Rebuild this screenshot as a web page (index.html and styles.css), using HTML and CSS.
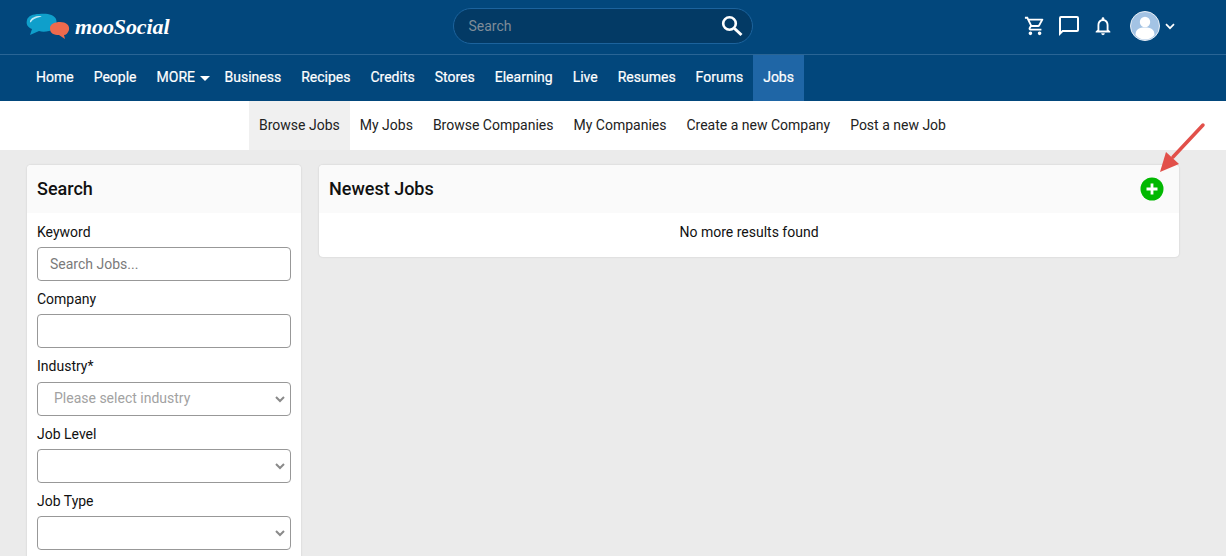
FILE: index.html
```html
<!DOCTYPE html>
<html lang="en">
<head>
<meta charset="utf-8">
<title>Jobs</title>
<link rel="stylesheet" href="styles.css">
</head>
<body>
<header class="topbar">
  <a class="logo" href="#">
    <svg class="logo-mark" width="44" height="27" viewBox="0 0 44 27">
      <path d="M13 1c7-1 15 0 17 5 2 6-1 11-7 12-4 1-7 1-10 0l-9 4 2-6C1 14 0 11 1 7c1-4 6-6 12-6z" fill="#0f9fcb"/>
      <path d="M4 8c1-3 5-5 10-5 2 0 2 1 0 1-4 1-7 2-9 5-1 1-1 0-1-1z" fill="#bfe8f5"/>
      <path d="M34 9c6 0 10 3 9 8-1 3-3 5-5 5l1 4-6-4c-5 0-9-1-9-7 0-4 5-6 10-6z" fill="#ee6a4d"/>
    </svg>
    <span class="logo-text">mooSocial</span>
  </a>
  <form class="site-search">
    <span class="site-search-text">Search</span>
    <svg width="22" height="22" viewBox="0 0 22 22" fill="none" stroke="#fff"><circle cx="8.5" cy="8.5" r="6.3" stroke-width="2.6"/><path d="M13.5 13.5l7 6.5" stroke-width="3"/></svg>
  </form>
  <div class="top-icons">
    <svg class="icon-cart" width="22" height="22" viewBox="0 0 24 24" fill="#fff"><path d="M15.55 13c.75 0 1.41-.41 1.75-1.03l3.58-6.49A1 1 0 0 0 20.01 4H5.21l-.94-2H1v2h2l3.6 7.59-1.35 2.44C4.52 15.37 5.48 17 7 17h12v-2H7l1.1-2h7.45zM6.16 6h12.15l-2.76 5H8.53L6.16 6zM7 18a2 2 0 1 0 0 4 2 2 0 0 0 0-4zm10 0a2 2 0 1 0 0 4 2 2 0 0 0 0-4z"/></svg>
    <svg class="icon-chat" width="24" height="24" viewBox="0 0 24 24" fill="#fff"><path d="M20 2H4a2 2 0 0 0-2 2v18l4-4h14a2 2 0 0 0 2-2V4a2 2 0 0 0-2-2zm0 14H5.2L4 17.2V4h16v12z"/></svg>
    <svg class="icon-bell" width="22" height="22" viewBox="0 0 24 24" fill="#fff"><path d="M12 22a2 2 0 0 0 2-2h-4a2 2 0 0 0 2 2zm6-6v-5c0-3.07-1.63-5.64-4.5-6.32V4a1.5 1.5 0 0 0-3 0v.68C7.64 5.36 6 7.92 6 11v5l-2 2v1h16v-1l-2-2zm-2 1H8v-6c0-2.48 1.51-4.5 4-4.5s4 2.02 4 4.5v6z"/></svg>
    <span class="avatar">
      <svg width="30" height="30" viewBox="0 0 30 30"><circle cx="15" cy="15" r="14.5" fill="#a3c3e4" stroke="#e8eef5"/><circle cx="15" cy="11" r="5.2" fill="#fff"/><path d="M5.5 24c0-6 4-7.5 9.5-7.5s9.500 1.500 9.500 7.500c-2.500 3-6 4.500-9.500 4.500s-7-1.500-9.500-4.500z" fill="#fff"/></svg>
      <svg width="10" height="7" viewBox="0 0 10 7" fill="none" stroke="#fff" stroke-width="1.700"><path d="M1 1.200l4 4 4-4"/></svg>
    </span>
  </div>
</header>
<nav class="mainnav">
  <a href="#">Home</a>
  <a href="#">People</a>
  <a class="more" href="#">MORE<i class="caret"></i></a>
  <a href="#">Business</a>
  <a href="#">Recipes</a>
  <a href="#">Credits</a>
  <a href="#">Stores</a>
  <a href="#">Elearning</a>
  <a href="#">Live</a>
  <a href="#">Resumes</a>
  <a href="#">Forums</a>
  <a class="active" href="#">Jobs</a>
</nav>
<nav class="subnav">
  <a class="active" href="#">Browse Jobs</a>
  <a href="#">My Jobs</a>
  <a href="#">Browse Companies</a>
  <a href="#">My Companies</a>
  <a href="#">Create a new Company</a>
  <a href="#">Post a new Job</a>
</nav>
<main class="content">
  <aside class="card sidebar">
    <h2 class="card-head">Search</h2>
    <form class="filter">
      <label class="lbl">Keyword</label>
      <div class="field placeholder">Search Jobs...</div>
      <label class="lbl">Company</label>
      <div class="field"></div>
      <label class="lbl lbl-tall">Industry*</label>
      <div class="field select placeholder-select"><span class="select-text">Please select industry</span><svg class="chev" width="10" height="7" viewBox="0 0 10 7" fill="none" stroke="#8a8a8a" stroke-width="2"><path d="M1 1l4 4 4-4"/></svg></div>
      <label class="lbl">Job Level</label>
      <div class="field select"><svg class="chev" width="10" height="7" viewBox="0 0 10 7" fill="none" stroke="#8a8a8a" stroke-width="2"><path d="M1 1l4 4 4-4"/></svg></div>
      <label class="lbl">Job Type</label>
      <div class="field select"><svg class="chev" width="10" height="7" viewBox="0 0 10 7" fill="none" stroke="#8a8a8a" stroke-width="2"><path d="M1 1l4 4 4-4"/></svg></div>
    </form>
  </aside>
  <section class="card results">
    <div class="card-head results-head">
      <h2 class="results-title">Newest Jobs</h2>
      <a class="add" href="#"><svg width="24" height="24" viewBox="0 0 24 24"><circle cx="12" cy="12" r="11.500" fill="#02b802"/><path d="M12 6.500v11M6.500 12h11" stroke="#fff" stroke-width="2.800"/></svg></a>
    </div>
    <p class="empty">No more results found</p>
  </section>
</main>
<svg class="arrow" width="52" height="58" viewBox="0 0 52 58" fill="none"><path d="M46 5L16 37" stroke="#e2504a" stroke-width="3.500" stroke-linecap="round"/><path d="M3 52l6-20 13 12z" fill="#e2504a"/></svg>
</body>
</html>
```
FILE: styles.css
```css
* { box-sizing: border-box; }
html, body { height: 100%; overflow: hidden; }
body {
  margin: 0;
  background: #ebebeb;
  color: #111;
  font: 14px/20px Roboto, "Liberation Sans", sans-serif;
}
a { color: inherit; text-decoration: none; }
.topbar {
  position: relative;
  height: 55px;
  display: flex;
  align-items: center;
  justify-content: space-between;
  padding: 0 51px 2px 26px;
  background: #02477c;
  border-bottom: 1px solid #2a6595;
}
.logo { width: 300px; display: flex; align-items: center; gap: 5px; color: #fff; }
.logo-mark { flex: none; }
.logo-text {
  font: italic bold 22px/27px "Liberation Serif", serif;
  letter-spacing: -.1px;
}
.site-search {
  width: 300px;
  height: 36px;
  margin-right: 145px;
  padding: 0 9px 0 15px;
  display: flex;
  align-items: center;
  justify-content: space-between;
  background: #033a65;
  border: 1px solid #1c639d;
  border-radius: 18px;
}
.site-search-text { color: #7f8c98; }
.top-icons { display: flex; align-items: center; }
.icon-cart { margin-right: 11px; }
.icon-chat { margin-right: 11px; }
.icon-bell { margin-right: 16px; }
.avatar { display: flex; align-items: center; gap: 5px; }
.mainnav {
  height: 46px;
  display: flex;
  padding-left: 26px;
  background: #02477c;
  color: #fff;
}
.mainnav a { padding: 0 10px; line-height: 44px; -webkit-text-stroke: .2px #fff; }
.mainnav .more { padding-right: 4.500px; }
.mainnav .active { background: #1f66a6; padding-right: 10.500px; }
.caret {
  display: inline-block;
  margin-left: 5px;
  vertical-align: middle;
  border: 5px solid transparent;
  border-top-color: #fff;
  border-bottom: 0;
}
.subnav {
  height: 49px;
  display: flex;
  padding-left: 249px;
  background: #fff;
  color: #222;
}
.subnav a { padding: 0 10px; line-height: 48px; }
.subnav .active { background: #f0f0f0; }
.content {
  display: flex;
  align-items: flex-start;
  gap: 18px;
  padding: 15px 47px 0 27px;
}
.card {
  background: #fff;
  border-radius: 4px;
  box-shadow: 0 0 2px rgba(0, 0, 0, .16);
  overflow: hidden;
}
.card-head {
  height: 48px;
  margin: 0;
  background: #fafafa;
  font-size: 18px;
  font-weight: 500;
  line-height: 48px;
  color: #111;
}
.sidebar { flex: 0 0 274px; }
.sidebar .card-head { padding-left: 10px; }
.filter { padding: 9px 10px 20px; }
.lbl { display: block; height: 25px; line-height: 20px; }
.lbl-tall { height: 26px; }
.field {
  height: 34px;
  margin-bottom: 8px;
  padding-left: 12px;
  border: 1px solid #989898;
  border-radius: 4px;
  background: #fff;
  line-height: 32px;
  color: #7a7a7a;
}
.select { display: flex; align-items: center; justify-content: flex-end; padding-right: 5px; }
.placeholder-select { justify-content: space-between; padding-left: 16px; color: #a2a2a2; }
.select-text { margin-top: -2px; }
.chev { flex: none; }
.results { flex: 1; height: 92px; }
.results-head { display: flex; align-items: center; justify-content: space-between; padding: 0 15px 0 10px; }
.results-title { margin: 0; font: inherit; }
.add { display: flex; }
.empty { margin: 0; padding-top: 9px; text-align: center; }
.arrow { position: absolute; left: 1157px; top: 120px; }
```
